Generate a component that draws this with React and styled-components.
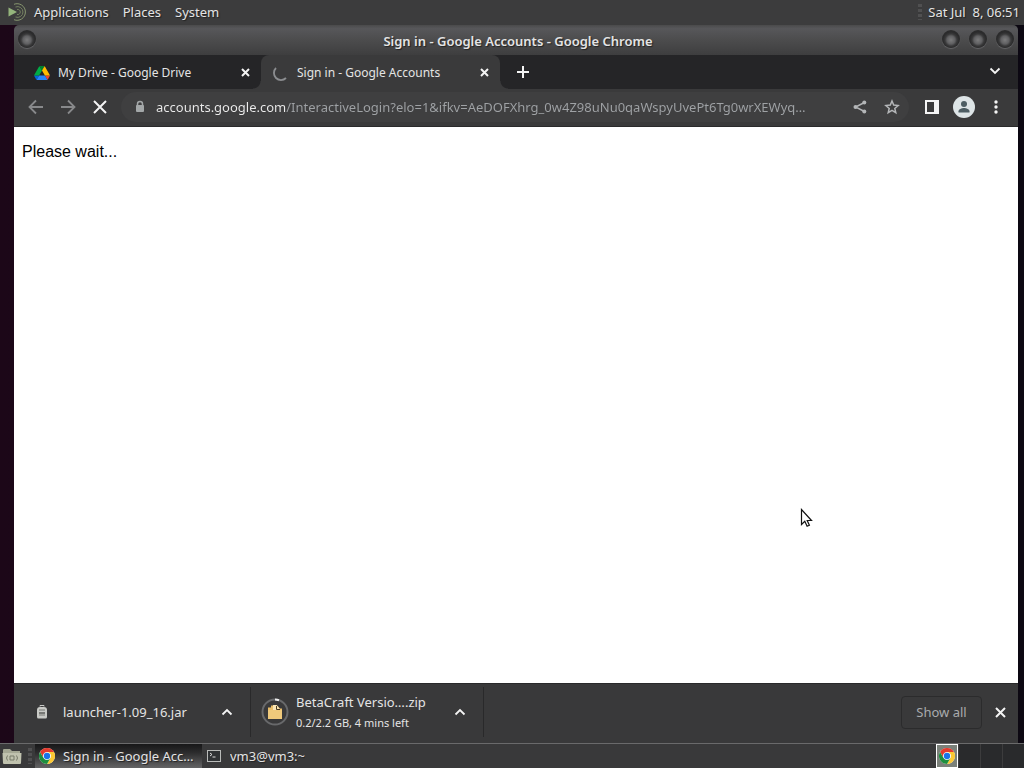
import React, { useState } from "react";
import styled, { createGlobalStyle, css } from "styled-components";

const GlobalStyle = createGlobalStyle`
  * {
    box-sizing: border-box;
  }
  body {
    margin: 0;
    font-family: "Noto Sans", sans-serif;
    font-size: 13px;
    line-height: 18px;
    color: #e4e4e4;
  }
  button, input {
    font: inherit;
    color: inherit;
    border: 0;
    background: none;
    padding: 0;
  }
`;

/* ---------- desktop ---------- */

const Desktop = styled.div`
  position: relative;
  display: flex;
  flex-direction: column;
  height: 100vh;
  overflow: hidden;
  background: linear-gradient(90deg, #1c0718 0%, #180620 50%, #0c0812 100%);
`;

const TopPanel = styled.header`
  flex: none;
  display: flex;
  align-items: center;
  height: 25px;
  padding: 0 4px 1px 8px;
  background: #3c3c3d;
  text-shadow: 1px 1px 1px #222222;
`;

const MenuBar = styled.nav`
  display: flex;
  gap: 14px;
  margin-left: 6px;
`;

const MenuButton = styled.button`
  text-shadow: inherit;
`;

const Grip = styled.span`
  width: 4px;
  height: 16px;
  background: repeating-linear-gradient(#505051 0 3px, #3a3a3b 3px 5px);
`;

const Clock = styled.time`
  margin-left: 6px;
  white-space: pre;
`;

const Spacer = styled.div`
  flex: 1;
`;

/* ---------- window ---------- */

const Window = styled.main`
  flex: 1;
  min-height: 0;
  display: flex;
  flex-direction: column;
  margin: 0 6px 0 14px;
`;

const TitleBar = styled.div`
  flex: none;
  display: flex;
  align-items: center;
  height: 30px;
  padding: 0 4px;
  border-radius: 5px 5px 0 0;
  background: linear-gradient(#4a4a4b 0%, #57575a 12%, #4c4c4d 50%, #3e3e3f 100%);
`;

const TitleSide = styled.div`
  flex: none;
  display: flex;
  justify-content: ${p => (p.$end ? "flex-end" : "flex-start")};
  gap: 9px;
  width: 72px;
  padding-bottom: 2px;
`;

const WindowTitle = styled.h1`
  flex: 1;
  margin: 2px 0 0 4px;
  font-size: 13px;
  line-height: 18px;
  font-weight: 600;
  text-align: center;
  text-shadow: 1px 1px 1px #222222;
`;

const RoundButton = styled.button`
  width: 18px;
  height: 18px;
  border-radius: 50%;
  background: radial-gradient(circle at 9px 10px, #7c7c7d 0, #606062 4px, #39393a 6px, #2b2b2c 8px);
  box-shadow: 0 1px 1px #666668;
`;

const TabStrip = styled.div`
  flex: none;
  display: flex;
  align-items: stretch;
  height: 34px;
  padding: 0 7px 0 8px;
  background: #252527;
`;

const Tab = styled.div`
  position: relative;
  display: flex;
  align-items: center;
  width: 239px;
  padding: 1px 8px 0 12px;
  font-size: 12px;
  ${p =>
    p.$active &&
    css`
      background: #3a3a3b;
      border-radius: 8px 8px 0 0;
      &::before,
      &::after {
        content: "";
        position: absolute;
        bottom: 0;
        width: 8px;
        height: 8px;
      }
      &::before {
        right: 100%;
        background: radial-gradient(circle at 0 0, transparent 7px, #3a3a3b 8px);
      }
      &::after {
        left: 100%;
        background: radial-gradient(circle at 100% 0, transparent 7px, #3a3a3b 8px);
      }
    `}
`;

const TabLabel = styled.button`
  flex: 1;
  margin-left: 8px;
  text-align: left;
  white-space: nowrap;
`;

const IconButton = styled.button`
  flex: none;
  display: inline-flex;
  align-items: center;
  justify-content: center;
  width: ${p => p.$size || 32}px;
  height: ${p => p.$size || 32}px;
  color: ${p => p.$color || "#f4f4f4"};
`;

const NewTab = styled(IconButton)`
  margin: 1px 0 0 7px;
`;

const Toolbar = styled.div`
  flex: none;
  display: flex;
  align-items: center;
  height: 38px;
  padding: 0 6px 1px;
  background: #3a3a3b;
  border-bottom: 1px solid #2a2a2b;
`;

const Omnibox = styled.label`
  flex: 1;
  min-width: 0;
  display: flex;
  align-items: center;
  height: 30px;
  margin: 0 7px 0 5px;
  padding: 0 1px 0 13px;
  border-radius: 15px;
  background: #3f3f40;
`;

const Url = styled.input`
  flex: 1;
  min-width: 0;
  height: 22px;
  margin-left: 10px;
  text-overflow: ellipsis;
  color: transparent;
  background: linear-gradient(90deg, #ececec 130px, #9fa2a5 130px);
  background-clip: text;
  outline: none;
`;

const Page = styled.section`
  flex: 1;
  min-height: 0;
  padding: 16px 8px;
  background: #ffffff;
  color: #000000;
  font-family: "Liberation Sans", Arial, sans-serif;
  font-size: 16px;

  p {
    margin: 0;
  }
`;

/* ---------- downloads ---------- */

const Shelf = styled.footer`
  flex: none;
  display: flex;
  align-items: center;
  height: 60px;
  padding: 0 2px 3px 0;
  background: #39393a;
  border-top: 1px solid #29292a;
`;

const Download = styled.div`
  display: flex;
  align-items: center;
  width: ${p => p.$width}px;
  height: 50px;
  padding: 0 7px 0 ${p => p.$inset}px;
  border-right: 1px solid #29292a;
`;

const FileInfo = styled.button`
  flex: 1;
  margin-left: ${p => p.$gap}px;
  text-align: left;
  white-space: nowrap;
`;

const Status = styled.small`
  display: block;
  margin-top: 3px;
  font-size: 11px;
`;

const ShowAll = styled.button`
  width: 81px;
  height: 33px;
  margin-right: 2px;
  border: 1px solid #2b2b2c;
  border-radius: 4px;
  color: #a9abad;
`;

/* ---------- bottom panel ---------- */

const Taskbar = styled.footer`
  flex: none;
  display: flex;
  align-items: center;
  height: 25px;
  padding-left: 2px;
  background: #39393a;
  border-top: 1px solid #6a6a6b;
`;

const TaskGrip = styled(Grip)`
  margin: 0 3px 0 6px;
`;

const Task = styled.button`
  display: flex;
  align-items: center;
  gap: 8px;
  height: 100%;
  min-width: 0;
  width: 167px;
  padding: 0 4px;
  white-space: nowrap;
  text-shadow: 1px 1px 1px #222222;
  background: ${p => (p.$active ? "linear-gradient(#171718, #2b2b2c 35%, #646465)" : "none")};

  span {
    overflow: hidden;
    text-overflow: ellipsis;
  }
`;

const Workspace = styled.button`
  display: flex;
  align-items: center;
  justify-content: center;
  width: 22px;
  height: 100%;
  background: ${p => (p.$active ? "#7b817a" : "#292a2c")};
  border: ${p => (p.$active ? "1px solid #ffffff" : "0")};
  border-left: ${p => (p.$active ? "1px solid #ffffff" : "1px solid #3c3c3d")};
`;

const Pointer = styled.svg`
  position: absolute;
  left: 800px;
  top: 508px;
`;

/* ---------- drawings ---------- */

const MateLogo = () => (
  <svg width="20" height="20" viewBox="0 0 20 20" fill="none" stroke="#87966f">
    <path d="M6 2.3A8.3 8.3 0 1 1 6 17.7" />
    <path d="M7.5 5A5.4 5.4 0 1 1 7.5 15" stroke="#738060" />
    <path d="M9 7.5A2.6 2.6 0 1 1 9 12.5" stroke="#738060" />
    <path d="M0.5 5.5v9L9 10z" fill="#94b47c" stroke="none" />
  </svg>
);

const DriveLogo = () => (
  <svg width="16" height="14" viewBox="0 0 87.3 78">
    <path d="M6.6 66.85l3.85 6.65c.8 1.4 1.95 2.5 3.3 3.3L27.5 53H0c0 1.55.4 3.1 1.2 4.5z" fill="#0066da" />
    <path d="M43.65 25L29.9 1.2c-1.35.8-2.5 1.9-3.3 3.3l-25.4 44A9 9 0 0 0 0 53h27.5z" fill="#00ac47" />
    <path d="M73.55 76.8c1.35-.8 2.5-1.9 3.3-3.3l1.6-2.75L86.1 57.5c.8-1.4 1.2-2.95 1.2-4.5H59.8l5.85 11.5z" fill="#ea4335" />
    <path d="M43.65 25L57.4 1.2C56.05.4 54.5 0 52.9 0H34.4c-1.6 0-3.15.45-4.5 1.2z" fill="#00832d" />
    <path d="M59.8 53H27.5L13.75 76.8c1.35.8 2.9 1.2 4.5 1.2h50.8c1.6 0 3.15-.45 4.5-1.2z" fill="#2684fc" />
    <path d="M73.4 26.5l-12.7-22c-.8-1.4-1.95-2.5-3.3-3.3L43.65 25 59.8 53h27.45c0-1.55-.4-3.1-1.2-4.5z" fill="#ffba00" />
  </svg>
);

const ChromeLogo = ({ size = 16 }) => (
  <svg width={size} height={size} viewBox="0 0 48 48">
    <circle cx="24" cy="24" r="24" fill="#fff" />
    <path d="M24 12h20.8A24 24 0 0 0 3.2 12l10.4 18A12 12 0 0 1 24 12z" fill="#e33b2e" />
    <path d="M34.4 30L24 48a24 24 0 0 0 20.8-36H24a12 12 0 0 1 10.4 18z" fill="#fcc934" />
    <path d="M13.6 30L3.2 12A24 24 0 0 0 24 48l10.4-18a12 12 0 0 1-20.8 0z" fill="#1e8e3e" />
    <circle cx="24" cy="24" r="9.5" fill="#1a73e8" />
  </svg>
);

const Spinner = () => (
  <svg width="16" height="16" viewBox="0 0 16 16" fill="none" stroke="#8b8d90" strokeWidth="1.8">
    <path d="M3 3A7 7 0 0 0 13 13" />
  </svg>
);

const Cross = ({ size = 9, weight = 2 }) => (
  <svg width={size} height={size} viewBox={`0 0 ${size} ${size}`} stroke="currentColor" strokeWidth={weight}>
    <path d={`M1 1L${size - 1} ${size - 1}M${size - 1} 1L1 ${size - 1}`} />
  </svg>
);

const Plus = () => (
  <svg width="12" height="12" viewBox="0 0 12 12" stroke="currentColor" strokeWidth="2">
    <path d="M6 0v12M0 6h12" />
  </svg>
);

const Chevron = ({ up }) => (
  <svg width="12" height="8" viewBox="0 0 12 8" fill="none" stroke="currentColor" strokeWidth="1.8">
    <path d={up ? "M1.5 6.5L6 2l4.5 4.5" : "M1.5 1.5L6 6l4.5-4.5"} />
  </svg>
);

const Arrow = ({ forward }) => (
  <svg width="16" height="16" viewBox="0 0 16 16" fill="none" stroke="currentColor" strokeWidth="1.8">
    <path d={forward ? "M1 8h13M8 1.5L14.5 8 8 14.5" : "M15 8H2M8 1.5L1.5 8 8 14.5"} />
  </svg>
);

const Lock = () => (
  <svg width="12" height="14" viewBox="0 0 12 14" fill="none">
    <path d="M3.5 6V4a2.5 2.5 0 0 1 5 0v2" stroke="#a3a7a8" strokeWidth="1.5" />
    <rect x="2" y="5" width="8" height="7" rx="1" fill="#a3a7a8" />
  </svg>
);

const Share = () => (
  <svg width="14" height="14" viewBox="0 0 14 14" fill="currentColor">
    <path d="M11.5 2.5L2.5 7l9 4.5" fill="none" stroke="currentColor" strokeWidth="1.4" />
    <circle cx="11.3" cy="2.6" r="2" />
    <circle cx="2.5" cy="7" r="2" />
    <circle cx="11.3" cy="11.4" r="2" />
  </svg>
);

const Star = () => (
  <svg width="16" height="16" viewBox="0 0 16 16" fill="none" stroke="currentColor" strokeWidth="1.5">
    <path d="M8 2l1.7 4.1 4.4.4-3.3 2.9 1 4.3L8 11.4l-3.8 2.3 1-4.3L1.9 6.5l4.4-.4z" />
  </svg>
);

const SidePanel = () => (
  <svg width="14" height="14" viewBox="0 0 14 14" fill="none">
    <rect x="1" y="1" width="12" height="12" stroke="currentColor" strokeWidth="2" />
    <rect x="9" y="1" width="4" height="12" fill="currentColor" />
  </svg>
);

const Avatar = () => (
  <svg width="22" height="22" viewBox="0 0 22 22">
    <circle cx="11" cy="11" r="11" fill="#dde4e6" />
    <circle cx="11" cy="8" r="3" fill="#4d5d63" />
    <path d="M5.5 16.5v-1.2c0-2 3.2-3.3 5.5-3.3s5.5 1.3 5.5 3.3v1.2z" fill="#4d5d63" />
  </svg>
);

const Dots = () => (
  <svg width="4" height="14" viewBox="0 0 4 14" fill="currentColor">
    <circle cx="2" cy="2" r="1.7" />
    <circle cx="2" cy="7" r="1.7" />
    <circle cx="2" cy="12" r="1.7" />
  </svg>
);

const JarIcon = () => (
  <svg width="12" height="16" viewBox="0 0 12 16">
    <path d="M4 2.5V1.5h4v1" fill="none" stroke="#c9cac6" />
    <path d="M1 6a3 3 0 0 1 3-3h4a3 3 0 0 1 3 3v7a1.5 1.5 0 0 1-1.5 1.5h-7A1.5 1.5 0 0 1 1 13z" fill="#c9cac6" />
    <path d="M3 5.5h6v1H3zM3 8h6v2H3z" fill="#777875" />
    <path d="M3 10h6v2H3z" fill="#a0a19d" />
  </svg>
);

const ZipProgress = () => (
  <svg width="28" height="28" viewBox="0 0 28 28">
    <circle cx="14" cy="14" r="12.5" fill="none" stroke="#68696b" strokeWidth="2" />
    <path d="M14 1.5a12.5 12.5 0 0 1 4 .7" fill="none" stroke="#f0f0f0" strokeWidth="2" />
    <path d="M7 9.5h3V7.5h6l3 3h2v10.5H7z" fill="#e9bd68" />
    <path d="M12 7v5h7l-2-3.5-1.5-1.5z" fill="#f9e5b4" />
    <path d="M7 12h14v9H7z" fill="#efc97b" />
    <path d="M15.5 8v3.5H19" fill="none" stroke="#4b3b20" />
  </svg>
);

const FilesIcon = () => (
  <svg width="20" height="18" viewBox="0 0 20 18">
    <path d="M1 3a1 1 0 0 1 1-1h6l2 2h8v3H1z" fill="#a5a894" />
    <path d="M0.5 6h19l-.5 10a1 1 0 0 1-1 1H2a1 1 0 0 1-1-1z" fill="#c0c2ae" />
    <path d="M8 9h4v4H8zM5.5 8.5l-1 2.5 1 2.5M14.5 8.5l1 2.5-1 2.5" fill="none" stroke="#777a69" />
  </svg>
);

const TerminalIcon = () => (
  <svg width="16" height="14" viewBox="0 0 16 14" fill="none">
    <rect x="1.5" y="1.5" width="13" height="11" fill="#303335" stroke="#b9bbb9" />
    <path d="M4 4l2 1.5L4 7M6.5 8h3" stroke="#dddddd" />
  </svg>
);

const DOWNLOADS = [
  { name: "launcher-1.09_16.jar", icon: <JarIcon />, width: 237, inset: 22, gap: 15 },
  {
    name: "BetaCraft Versio….zip",
    status: "0.2/2.2 GB, 4 mins left",
    icon: <ZipProgress />,
    width: 233,
    inset: 10,
    gap: 7
  }
];

export default () => {
  const [url, setUrl] = useState(
    "accounts.google.com/InteractiveLogin?elo=1&ifkv=AeDOFXhrg_0w4Z98uNu0qaWspyUvePt6Tg0wrXEWyq…"
  );

  return (
    <React.Fragment>
      <GlobalStyle />
      <Desktop>
        <TopPanel>
          <MateLogo />
          <MenuBar>
            <MenuButton>Applications</MenuButton>
            <MenuButton>Places</MenuButton>
            <MenuButton>System</MenuButton>
          </MenuBar>
          <Spacer />
          <Grip />
          <Clock>{"Sat Jul  8, 06:51"}</Clock>
        </TopPanel>

        <Window>
          <TitleBar>
            <TitleSide>
              <RoundButton aria-label="Window menu" />
            </TitleSide>
            <WindowTitle>Sign in - Google Accounts - Google Chrome</WindowTitle>
            <TitleSide $end>
              <RoundButton aria-label="Minimize" />
              <RoundButton aria-label="Maximize" />
              <RoundButton aria-label="Close window" />
            </TitleSide>
          </TitleBar>

          <TabStrip>
            <Tab>
              <DriveLogo />
              <TabLabel>My Drive - Google Drive</TabLabel>
              <IconButton $size={16} aria-label="Close tab">
                <Cross />
              </IconButton>
            </Tab>
            <Tab $active>
              <Spinner />
              <TabLabel>Sign in - Google Accounts</TabLabel>
              <IconButton $size={16} aria-label="Close tab">
                <Cross />
              </IconButton>
            </Tab>
            <NewTab aria-label="New tab">
              <Plus />
            </NewTab>
            <Spacer />
            <IconButton aria-label="Search tabs">
              <Chevron />
            </IconButton>
          </TabStrip>

          <Toolbar>
            <IconButton $color="#88898b" aria-label="Back">
              <Arrow />
            </IconButton>
            <IconButton $color="#88898b" aria-label="Forward">
              <Arrow forward />
            </IconButton>
            <IconButton aria-label="Stop">
              <Cross size={14} />
            </IconButton>
            <Omnibox>
              <Lock />
              <Url
                aria-label="Address"
                spellCheck={false}
                value={url}
                onChange={e => setUrl(e.target.value)}
              />
              <IconButton $color="#b4b6b8" aria-label="Share">
                <Share />
              </IconButton>
              <IconButton $color="#b4b6b8" aria-label="Bookmark">
                <Star />
              </IconButton>
            </Omnibox>
            <IconButton aria-label="Side panel">
              <SidePanel />
            </IconButton>
            <IconButton aria-label="Profile">
              <Avatar />
            </IconButton>
            <IconButton aria-label="Menu">
              <Dots />
            </IconButton>
          </Toolbar>

          <Page>
            <p>Please wait...</p>
          </Page>

          <Shelf>
            {DOWNLOADS.map(d => (
              <Download key={d.name} $width={d.width} $inset={d.inset}>
                {d.icon}
                <FileInfo $gap={d.gap}>
                  {d.name}
                  {d.status && <Status>{d.status}</Status>}
                </FileInfo>
                <IconButton aria-label={`Options for ${d.name}`}>
                  <Chevron up />
                </IconButton>
              </Download>
            ))}
            <Spacer />
            <ShowAll>Show all</ShowAll>
            <IconButton aria-label="Close downloads">
              <Cross size={11} />
            </IconButton>
          </Shelf>
        </Window>

        <Taskbar>
          <FilesIcon />
          <TaskGrip />
          <Task $active>
            <ChromeLogo />
            <span>Sign in - Google Acc…</span>
          </Task>
          <Task>
            <TerminalIcon />
            <span>vm3@vm3:~</span>
          </Task>
          <Spacer />
          <Workspace $active aria-label="Workspace 1">
            <ChromeLogo />
          </Workspace>
          <Workspace aria-label="Workspace 2" />
          <Workspace aria-label="Workspace 3" />
          <Workspace aria-label="Workspace 4" />
        </Taskbar>

        <Pointer width="14" height="22" viewBox="0 0 14 22">
          <path
            d="M1.5 1.5v15l3.3-3.2 2.3 5 2.3-1-2.2-4.8h4.3z"
            fill="#ffffff"
            stroke="#111111"
            strokeWidth="1.2"
          />
        </Pointer>
      </Desktop>
    </React.Fragment>
  );
};
